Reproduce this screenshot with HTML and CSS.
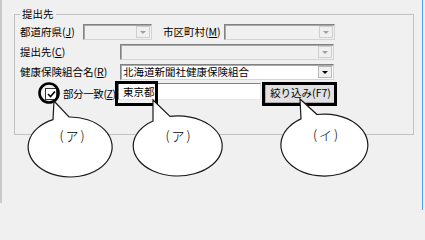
FILE: index.html
```html
<!DOCTYPE html>
<html lang="ja">
<head>
<meta charset="utf-8">
<link rel="stylesheet" href="styles.css">
</head>
<body>
<div class="window">
  <div class="panel">
    <fieldset class="group">
      <legend>提出先</legend>
      <div class="row r1">
        <span class="lbl lbl-pref">都道府県(<u>J</u>)</span>
        <span class="combo disabled w-pref"><span class="drop"><span class="tri"></span></span></span>
        <span class="lbl lbl-city">市区町村(<u>M</u>)</span>
        <span class="combo disabled w-city"><span class="drop"><span class="tri"></span></span></span>
      </div>
      <div class="row r2">
        <span class="lbl lbl-wide">提出先(<u>C</u>)</span>
        <span class="combo disabled w-wide"><span class="drop"><span class="tri"></span></span></span>
      </div>
      <div class="row r3">
        <span class="lbl lbl-wide">健康保険組合名(<u>R</u>)</span>
        <span class="combo enabled w-wide"><span class="val">北海道新聞社健康保険組合</span><span class="drop"><span class="tri"></span></span></span>
      </div>
      <div class="row r4">
        <span class="check"><svg width="9" height="8" viewBox="0 0 9 8"><path d="M1 4 L3.5 6.5 L8 1.5" fill="none" stroke="#000" stroke-width="1.6"/></svg></span>
        <span class="lbl lbl-part">部分一致(<u>Z</u>)</span>
        <span class="textbox">東京都</span>
        <span class="button">絞り込み(F7)</span>
      </div>
    </fieldset>
  </div>
  <svg class="overlay" width="425" height="210" viewBox="0 0 425 210">
    <rect x="116.5" y="82.5" width="40" height="22" fill="none" stroke="#000" stroke-width="3"/>
    <rect x="263.5" y="83.5" width="72" height="21" fill="none" stroke="#000" stroke-width="3"/>
    <circle cx="49" cy="93" r="9.5" fill="none" stroke="#000" stroke-width="2.6"/>
    <path d="M53 119.6 L54 101 L69 117 A42 30 0 1 1 53 119.6 Z" fill="#fff" stroke="#1a1a1a" stroke-width="1.2"/>
    <path d="M153 121 L153 100 L170 116.4 A44.5 30 0 1 1 153 121 Z" fill="#fff" stroke="#1a1a1a" stroke-width="1.2"/>
    <path d="M301 118.9 L300 99 L317 114.5 A43.5 31 0 1 1 301 118.9 Z" fill="#fff" stroke="#1a1a1a" stroke-width="1.2"/>
    <text class="callout" x="73" y="140.5">(ア)</text>
    <text class="callout" x="179" y="140.5">(ア)</text>
    <text class="callout" x="326.5" y="139.5">(イ)</text>
  </svg>
</div>
</body>
</html>
```

FILE: styles.css
```css
html, body {
  margin: 0;
  padding: 0;
  background: #f0f0f0;
}
body {
  width: 425px;
  height: 210px;
  overflow: hidden;
  font-family: "Noto Sans CJK JP", "Noto Sans", sans-serif;
  font-size: 10.5px;
  color: #000;
}
.window {
  position: relative;
  width: 422px;
  height: 210px;
  border-right: 1px solid #4aa0ea;
}
.panel {
  box-sizing: border-box;
  width: 414px;
  height: 203px;
  border-left: 2px solid #c9c9c9;
  padding: 7px 0 0 12px;
}
.group {
  box-sizing: border-box;
  width: 400px;
  height: 128px;
  margin: 0;
  padding: 0 0 0 5px;
  border: 1px solid #c2c2c2;
}
.group legend {
  padding: 0 2px;
  line-height: 14px;
  font-size: 10.5px;
}
.row {
  display: flex;
  align-items: center;
  height: 16px;
  margin-bottom: 4px;
  white-space: nowrap;
}
.r1 { margin-top: 3px; }
.r4 {
  height: 21px;
  margin-top: -1px;
  padding-left: 25px;
}
.lbl {
  line-height: 16px;
}
.lbl u { text-underline-offset: 1px; }
.lbl-pref { width: 63px; }
.lbl-city { width: 61px; margin-left: 11px; }
.lbl-wide { width: 100px; }
.lbl-part {
  width: 55px;
  margin-left: 6px;
  letter-spacing: -0.4px;
}
.combo {
  box-sizing: border-box;
  height: 16px;
  display: flex;
  align-items: center;
  justify-content: space-between;
  border: 1px solid;
  border-color: #828282 #d4d4d4 #d4d4d4 #828282;
  box-shadow: inset 1px 1px 0 #a8a8a8;
}
.combo.disabled { background: #f0f0f0; }
.combo.enabled { background: #fff; }
.w-pref { width: 69px; }
.w-city { width: 111px; }
.w-wide { width: 214px; }
.val {
  padding-left: 2px;
  line-height: 14px;
}
.drop {
  box-sizing: border-box;
  margin-left: auto;
  width: 14px;
  height: 12px;
  margin-right: 1px;
  border: 1px solid #cfcfcf;
  background: #f0f0f0;
  display: flex;
  align-items: center;
  justify-content: center;
}
.tri {
  width: 0;
  height: 0;
  border-left: 3px solid transparent;
  border-right: 3px solid transparent;
  border-top: 3px solid #a0a0a0;
  margin-top: 1px;
}
.enabled .tri { border-top-color: #000; }
.enabled .drop { border-color: #b8b8b8; }
.check {
  box-sizing: border-box;
  width: 12px;
  height: 12px;
  border: 1px solid #333;
  background: #fff;
  display: flex;
  align-items: center;
  justify-content: center;
}
.textbox {
  box-sizing: border-box;
  width: 143px;
  height: 17px;
  background: #fff;
  border: 1px solid;
  border-color: #828282 #e6e6e6 #e6e6e6 #828282;
  padding-left: 4px;
  line-height: 15px;
  align-self: flex-start;
}
.button {
  box-sizing: border-box;
  width: 71px;
  height: 20px;
  margin-left: 4px;
  background: #e1e1e1;
  border: 1px solid #adadad;
  text-align: center;
  line-height: 18px;
  align-self: flex-start;
}
.overlay {
  position: absolute;
  top: 0;
  left: 0;
  pointer-events: none;
}
.callout {
  font-family: "Noto Sans CJK JP", sans-serif;
  font-size: 13px;
  font-weight: 300;
  text-anchor: middle;
  letter-spacing: 2px;
  fill: #000;
}
```
